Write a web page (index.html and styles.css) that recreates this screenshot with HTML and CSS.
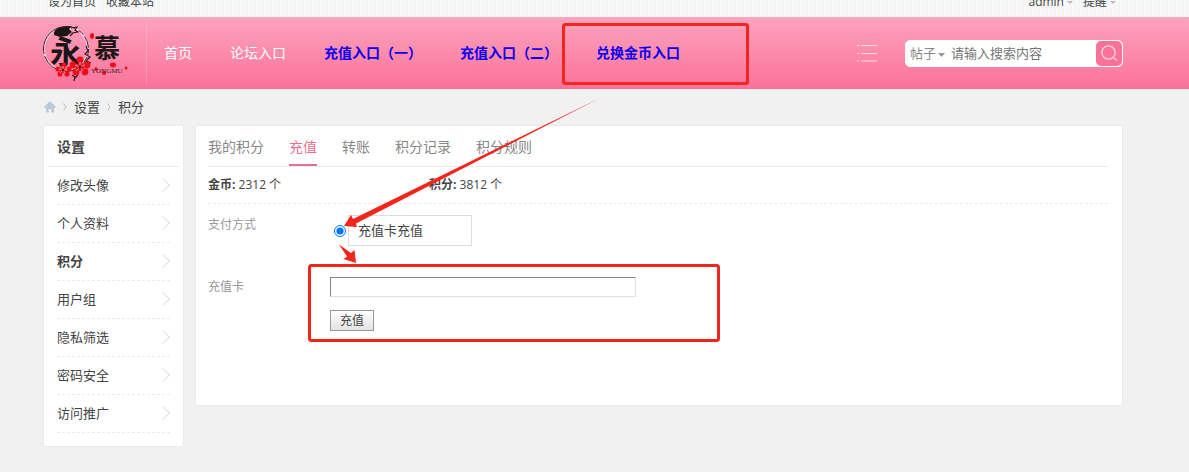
FILE: index.html
```
<!DOCTYPE html>
<html lang="zh-CN">
<head>
    <meta charset="UTF-8">
    <meta name="viewport" content="width=device-width, initial-scale=1.0">
    <title>积分充值</title>
    <link rel="stylesheet" href="styles.css">
</head>
<body>
    <!-- Top bar -->
    <div class="topbar">
        <div class="topbar-inner wrap">
            <a href="#">设为首页</a>
            <a href="#">收藏本站</a>
            <a href="#" class="user-link has-menu">admin</a>
            <a href="#" class="has-menu">提醒</a>
        </div>
    </div>

    <!-- Header -->
    <header class="header">
        <div class="header-inner wrap">
            <a href="#" class="logo" aria-label="永慕">
                <svg width="90" height="62" viewBox="0 0 90 62">
                    <circle cx="23" cy="27" r="22" fill="none" stroke="#fbd3df" stroke-width="2"/>
                    <circle cx="23" cy="27" r="22.5" fill="none" stroke="#3a2028" stroke-width="1" stroke-dasharray="6 2 12 3 40 2 50 4"/>
                    <path d="M11 10q3-5 9-5l9-1-3 3 3 3-5 4-7 1-6-2z" fill="#1c1518"/>
                    <path d="M28 6l6-1-2 3 3 2-6 1M30 11l-3 3M43 24l2 5-3 3 5 3-4 4 5 2M29 53l3 2-1 4M35 53l-3 3" fill="none" stroke="#2a1a1f" stroke-width="1.2"/>
                    <text x="7" y="41" class="logo-char logo-char-big">永</text>
                    <text x="51" y="36" class="logo-char">慕</text>
                    <g fill="#f00d18">
                        <ellipse cx="49" cy="14" rx="2" ry="3"/>
                        <ellipse cx="70" cy="43" rx="3" ry="2.4"/>
                        <circle cx="61" cy="51" r="2"/>
                        <circle cx="83" cy="46" r="1.5"/>
                        <circle cx="53" cy="47" r="1.8"/>
                        <circle cx="37" cy="38" r="3.4"/>
                        <circle cx="44" cy="43" r="3.4"/>
                        <circle cx="42" cy="50" r="3.4"/>
                        <circle cx="33" cy="50" r="3.4"/>
                        <circle cx="30" cy="43" r="3.4"/>
                        <circle cx="37" cy="45" r="4"/>
                        <circle cx="21" cy="43" r="2.6"/>
                        <circle cx="26" cy="47" r="2.6"/>
                        <circle cx="24" cy="52" r="2.6"/>
                        <circle cx="17" cy="52" r="2.6"/>
                        <circle cx="15" cy="47" r="2.6"/>
                        <circle cx="20" cy="48" r="3"/>
                    </g>
                    <path d="M37 45v-5M37 45l5-2M37 45l3 4M37 45l-4 4M37 45l-5-2M20 48v-4M20 48l4-1M20 48l2 3M20 48l-3 3M20 48l-4-1" stroke="#fba8bb" stroke-width="0.9"/>
                    <circle cx="37" cy="45" r="1.4" fill="#4a0a12"/>
                    <circle cx="20" cy="48" r="1.2" fill="#4a0a12"/>
                    <text x="48" y="51" class="logo-latin">YONGMU</text>
                </svg>
            </a>
            <nav class="nav">
                <a href="#">首页</a>
                <a href="#">论坛入口</a>
                <a href="#" class="hot">充值入口（一）</a>
                <a href="#" class="hot">充值入口（二）</a>
                <a href="#" class="hot">兑换金币入口</a>
            </nav>
            <button type="button" class="menu-btn" aria-label="快捷导航">
                <svg width="20" height="18" viewBox="0 0 20 18" fill="none" stroke="#ffe0e9" stroke-width="1.2">
                    <path d="M4 1.5h16M4 9.5h16M4 17h16M0 1.5h2M0 9.5h2M0 17h2"/>
                </svg>
            </button>
            <form class="search">
                <select aria-label="搜索类型">
                    <option>帖子</option>
                    <option>用户</option>
                </select>
                <input type="text" placeholder="请输入搜索内容" aria-label="搜索内容">
                <button type="submit" aria-label="搜索">
                    <svg width="17" height="17" viewBox="0 0 17 17" fill="none" stroke="#ffd3e0" stroke-width="1.4">
                        <circle cx="7.5" cy="7.5" r="6.6"/>
                        <path d="M12 12.5l4 3"/>
                    </svg>
                </button>
            </form>
        </div>
    </header>

    <div class="wrap">
        <!-- Breadcrumb -->
        <div class="crumb">
            <a href="#" aria-label="首页">
                <svg width="13" height="12" viewBox="0 0 13 12"><path d="M7 0l6 6-1 1h-1v4.5H8.300V8H5.700v3.500H3V7H2L1 6z" fill="#b8ccd8"/></svg>
            </a>
            <svg class="sep" width="4" height="8" viewBox="0 0 4 8"><path d="M.5.5L3 4 .5 7.5"/></svg>
            <a href="#">设置</a>
            <svg class="sep" width="4" height="8" viewBox="0 0 4 8"><path d="M.5.5L3 4 .5 7.5"/></svg>
            <a href="#">积分</a>
        </div>

        <div class="columns">
            <!-- Sidebar -->
            <aside class="sidebar">
                <h2>设置</h2>
                <ul>
                    <li><a href="#">修改头像</a></li>
                    <li><a href="#">个人资料</a></li>
                    <li><a href="#" class="current">积分</a></li>
                    <li><a href="#">用户组</a></li>
                    <li><a href="#">隐私筛选</a></li>
                    <li><a href="#">密码安全</a></li>
                    <li><a href="#">访问推广</a></li>
                </ul>
            </aside>

            <!-- Main content -->
            <main class="main">
                <div class="tabs">
                    <a href="#">我的积分</a>
                    <a href="#" class="active">充值</a>
                    <a href="#">转账</a>
                    <a href="#">积分记录</a>
                    <a href="#">积分规则</a>
                </div>
                <ul class="credits">
                    <li><b>金币:</b> 2312 个</li>
                    <li><b>积分:</b> 3812 个</li>
                </ul>
                <form class="pay-form">
                    <span class="field-name">支付方式</span>
                    <div class="pay-type">
                        <input type="radio" id="pay-card" name="pay" checked>
                        <label for="pay-card">充值卡充值</label>
                    </div>
                    <label for="card-no" class="field-name">充值卡</label>
                    <div class="card-field">
                        <input type="text" id="card-no">
                        <button type="button">充值</button>
                    </div>
                </form>
            </main>
        </div>
    </div>

    <!-- Guide marks over the page -->
    <svg class="guide" width="1189" height="472" viewBox="0 0 1189 472" aria-hidden="true">
        <g fill="none" stroke="#f4251b" stroke-width="3">
            <rect x="563.5" y="24.5" width="184" height="59" rx="2"/>
            <rect x="309.5" y="265.5" width="409" height="75" rx="2"/>
        </g>
        <g fill="#f4251b">
            <path d="M599 98.500L356 223.500 357 227 344 226 351 215 353 219z"/>
            <path d="M339 244.500L351 253 354.500 250 356 263 343.500 259 347 256.500z"/>
        </g>
    </svg>
</body>
</html>
```
FILE: styles.css
```
/* Global Styles */
:root {
    --pink: #fb7299;
    --text: #444;
    --muted: #888;
    --line: #ebebeb;
}

* {
    box-sizing: border-box;
}

body {
    margin: 0;
    font: 13px/20px "Open Sans", "Noto Sans CJK SC", sans-serif;
    color: var(--text);
    background: #f1f1f1;
}

a {
    color: inherit;
    text-decoration: none;
}

ul {
    list-style: none;
    margin: 0;
    padding: 0;
}

input, select, button {
    font: inherit;
    color: inherit;
    margin: 0;
}

.wrap {
    padding: 0 66px 0 43px;
}

/* Top bar */
.topbar {
    height: 17px;
    overflow: hidden;
    background: repeating-linear-gradient(90deg, #f9f9f9 0, #f9f9f9 2px, #f4f4f4 2px, #f4f4f4 4px);
}

.topbar-inner {
    display: flex;
    align-items: center;
    gap: 10px;
    height: 32px;
    margin-top: -14px;
    padding-left: 48px;
    padding-right: 73px;
    font-size: 12px;
}

.user-link {
    margin-left: auto;
}

.has-menu {
    display: flex;
    align-items: center;
    gap: 3px;
}

.has-menu::after {
    content: "";
    border: 3px solid transparent;
    border-top-color: #bbb;
    border-bottom: 0;
}

/* Header */
.header {
    background: linear-gradient(#fca3bd, var(--pink));
}

.header-inner {
    display: flex;
    align-items: center;
    height: 72px;
}

.logo {
    height: 62px;
    width: 104px;
    border-right: 1px solid rgba(255, 255, 255, 0.2);
}

.logo-char {
    font: bold 26px "Noto Sans CJK SC", sans-serif;
    fill: #1c1518;
}

.logo-char-big {
    font-size: 31px;
}

.logo-latin {
    font: 7px "Liberation Serif", serif;
    fill: #3a1520;
}

.nav {
    display: flex;
    gap: 38px;
    margin-left: 17px;
    font-size: 14px;
    color: #fff;
    white-space: nowrap;
}

.nav .hot {
    color: #0a00f0;
    font-weight: bold;
}

.menu-btn {
    display: flex;
    margin-left: auto;
    margin-right: 28px;
    padding: 0;
    border: 0;
    background: none;
}

.search {
    display: flex;
    width: 218px;
    height: 27px;
    border: 1px solid #fff;
    border-radius: 5px;
    background: #fff;
    overflow: hidden;
}

.search select {
    width: 39px;
    padding: 0 0 0 4px;
    border: 0;
    color: var(--muted);
    appearance: none;
    background: url("data:image/svg+xml,%3Csvg xmlns='http://www.w3.org/2000/svg' width='7' height='4'%3E%3Cpath d='M0 0h7L3.500 4z' fill='%23999'/%3E%3C/svg%3E") no-repeat right 12px;
}

.search input {
    flex: 1;
    min-width: 0;
    padding: 0 6px;
    border: 0;
    outline: 0;
}

.search input::placeholder {
    color: #757575;
}

.search button {
    display: flex;
    align-items: center;
    justify-content: center;
    width: 26px;
    padding: 0;
    border: 0;
    border-radius: 5px;
    background: var(--pink);
}

/* Breadcrumb */
.crumb {
    display: flex;
    align-items: center;
    gap: 7px;
    height: 36px;
}

.crumb a {
    display: flex;
}

.sep {
    fill: none;
    stroke: #bbb;
}

/* Sidebar */
.columns {
    display: flex;
    align-items: flex-start;
    gap: 11px;
}

.sidebar {
    width: 141px;
    padding: 0 4px 13px;
    border: 1px solid var(--line);
    background: #fff;
}

.sidebar h2 {
    height: 41px;
    margin: 0;
    padding: 0 9px;
    font-size: 14px;
    line-height: 42px;
    border-bottom: 1px solid var(--line);
}

.sidebar li {
    margin: 0 9px;
    border-bottom: 1px dashed var(--line);
}

.sidebar li a {
    display: flex;
    align-items: center;
    justify-content: space-between;
    height: 37px;
    padding-bottom: 2px;
}

.sidebar li a::after {
    content: "";
    width: 9px;
    height: 9px;
    margin-right: 2px;
    border: solid #e0e0e0;
    border-width: 1px 1px 0 0;
    transform: rotate(45deg);
}

.sidebar .current {
    font-weight: bold;
}

/* Main content */
.main {
    flex: 1;
    min-height: 280px;
    padding: 0 14px 74px 12px;
    border: 1px solid var(--line);
    background: #fff;
}

.tabs {
    display: flex;
    gap: 25px;
    height: 41px;
    font-size: 14px;
    line-height: 42px;
    color: var(--muted);
    border-bottom: 1px solid var(--line);
}

.tabs .active {
    height: 40px;
    color: #ea6f95;
    border-bottom: 2px solid #ea6f95;
}

.credits {
    display: grid;
    grid-template-columns: 221px 1fr;
    font-size: 12px;
    line-height: 36px;
    border-bottom: 1px dashed var(--line);
}

.pay-form {
    display: grid;
    grid-template-columns: 122px 1fr;
    row-gap: 31px;
    padding-top: 11px;
}

.field-name {
    font-size: 12px;
    color: #999;
}

.pay-type {
    display: flex;
    align-items: center;
    gap: 2px;
    padding-left: 4px;
}

.pay-type input {
    width: 12px;
    height: 12px;
}

.pay-type label {
    width: 124px;
    padding: 4px 9px 5px;
    border: 1px solid #ddd;
}

.card-field {
    display: flex;
    flex-direction: column;
    align-items: flex-start;
    gap: 13px;
}

.card-field input {
    width: 306px;
    height: 20px;
    border: 1px solid;
    border-color: #848484 #e0e0e0 #e0e0e0 #848484;
}

.card-field button {
    height: 21px;
    padding: 0 9px;
    font-size: 12px;
    line-height: 18px;
    border: 1px solid #999;
    background: linear-gradient(#fff, #e3e3e3);
}

/* Guide marks */
.guide {
    position: absolute;
    top: 0;
    left: 0;
    pointer-events: none;
}
```
